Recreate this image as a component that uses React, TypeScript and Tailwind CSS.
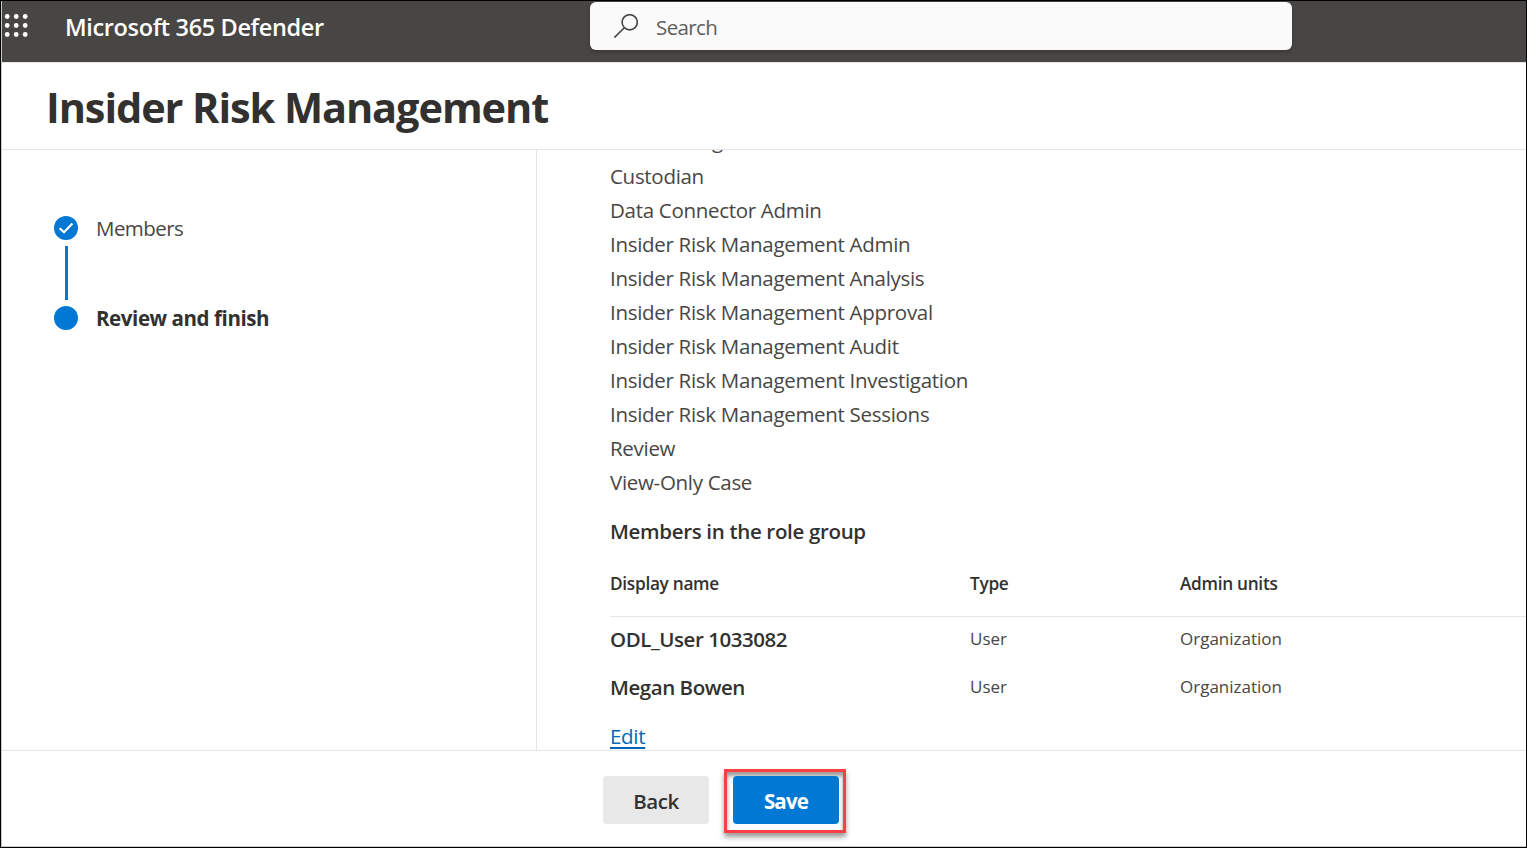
import React from "react";

const roles = [
  "Custodian",
  "Data Connector Admin",
  "Insider Risk Management Admin",
  "Insider Risk Management Analysis",
  "Insider Risk Management Approval",
  "Insider Risk Management Audit",
  "Insider Risk Management Investigation",
  "Insider Risk Management Sessions",
  "Review",
  "View-Only Case",
];

const members = [
  { name: "ODL_User 1033082", type: "User", units: "Organization" },
  { name: "Megan Bowen", type: "User", units: "Organization" },
];

const dotRows = [2.5, 11.5, 20.5];
const dotColumns = [3.2, 12.2, 21.2];

function Header() {
  return (
    <header className="flex h-[61px] shrink-0 bg-[#484644]">
      <svg className="mt-[13px] ml-[2px] h-6 w-[26px] shrink-0" viewBox="0 0 26 24" fill="#fff">
        {dotRows.map((y) => dotColumns.map((x) => <circle key={x + "-" + y} cx={x} cy={y} r="2.4" />))}
      </svg>
      <div className="ml-[35px] w-[525px] shrink-0 pt-[10px] text-[23.5px] leading-8 font-semibold tracking-[-0.35px] text-white">
        Microsoft 365 Defender
      </div>
      <div className="mt-px flex h-12 w-[702px] items-center rounded-md bg-[#fafafa] pl-6 shadow-[0_2px_4px_rgba(0,0,0,0.2)]">
        <svg className="h-6 w-6" viewBox="0 0 24 24" fill="none" stroke="#484644" strokeWidth="1.6">
          <circle cx="15.7" cy="8.3" r="7.6" />
          <path d="M10.3 13.7L0.4 23.6" />
        </svg>
        <div className="mt-[3px] ml-[18px] text-[20.5px] tracking-[-0.6px] text-[#605e5c]">Search</div>
      </div>
    </header>
  );
}

function Steps() {
  return (
    <nav className="w-[535px] shrink-0 border-r border-[#e5e5e5] pt-[66px] pl-[52px]">
      <div className="flex h-6 items-center">
        <svg className="h-6 w-6" viewBox="0 0 24 24">
          <circle cx="12" cy="12" r="12" fill="#0078d4" />
          <path d="M5.6 12.2L10 16.3L18.4 7.6" fill="none" stroke="#fff" strokeWidth="2.2" />
        </svg>
        <div className="ml-[18px] text-[20.5px] tracking-[-0.55px] text-[#484644]">Members</div>
      </div>
      <div className="mt-1.5 ml-[11px] h-[54px] w-[3px] bg-[#0078d4]" />
      <div className="mt-1.5 flex h-6 items-center">
        <span className="h-6 w-6 rounded-full bg-[#0078d4]" />
        <div className="ml-[18px] text-[20.5px] font-bold tracking-[-0.42px] text-[#323130]">Review and finish</div>
      </div>
    </nav>
  );
}

function Content() {
  return (
    <main className="min-w-0 flex-1 overflow-hidden pl-[73px] text-[20.5px] tracking-[-0.3px]">
      <ul className="-mt-[27px] text-[#484644]">
        <li className="mb-[2px] h-[34px] leading-[34px]">Case Management</li>
        {roles.map((role) => (
          <li key={role} className="h-[34px] leading-[34px]">{role}</li>
        ))}
      </ul>
      <h2 className="mt-[15px] leading-[34px] font-semibold tracking-[-0.33px] text-[#323130]">Members in the role group</h2>
      <div className="mt-[2px] grid h-[67px] grid-cols-[360px_210px_1fr] items-center border-b border-[#e5e5e5] text-[17.25px] font-semibold text-[#323130]">
        <span className="mt-0.5">Display name</span>
        <span className="mt-0.5">Type</span>
        <span className="mt-0.5">Admin units</span>
      </div>
      <div className="-mt-px">
        {members.map((m) => (
          <div key={m.name} className="grid h-12 grid-cols-[360px_210px_1fr] items-center text-[17px] tracking-normal text-[#484644]">
            <span className="-mt-0.5 text-[20.5px] font-semibold tracking-[-0.45px] text-[#323130]">{m.name}</span>
            <span className="-mt-0.5">{m.type}</span>
            <span className="-mt-0.5">{m.units}</span>
          </div>
        ))}
      </div>
      <div className="mt-[10px]">
        <a className="block h-[28px] w-[35px] leading-[28px] text-[#0067b8] underline decoration-2 underline-offset-[3px] [text-decoration-skip-ink:none]">
          Edit
        </a>
      </div>
    </main>
  );
}

function Footer() {
  return (
    <footer className="flex flex-1 border-t border-b border-t-[#e5e5e5] border-b-[#c8c8c8] pt-[25px] pl-[601px] text-[20.5px] tracking-[-0.5px]">
      <button className="h-12 w-[106px] rounded bg-[#e8e8e8] pt-0.5 font-semibold text-[#323130]">Back</button>
      <div className="relative ml-6 h-12 w-[106px]">
        <div className="pointer-events-none absolute -top-[7px] -left-[9px] h-16 w-[122px] border-3 border-[#f94144] shadow-[0_4px_5px_rgba(0,0,0,0.4),inset_0_4px_4px_rgba(0,0,0,0.4)]" />
        <button className="relative h-12 w-[106px] rounded bg-[#0078d4] pt-0.5 font-bold tracking-[-0.8px] text-white">Save</button>
      </div>
    </footer>
  );
}

export default function App() {
  return (
    <div className="h-[848px] w-[1527px] overflow-hidden border border-black bg-white font-['Open_Sans',sans-serif]">
      <div className="flex h-full flex-col border-l border-[#c8c8c8]">
        <Header />
        <h1 className="h-[88px] shrink-0 border-t border-b border-[#e5e5e5] pt-[15px] pl-[44px] text-[41.5px] leading-[58px] font-bold tracking-[-1.08px] text-[#323130]">
          Insider Risk Management
        </h1>
        <div className="flex h-[600px] shrink-0">
          <Steps />
          <Content />
        </div>
        <Footer />
      </div>
    </div>
  );
}
